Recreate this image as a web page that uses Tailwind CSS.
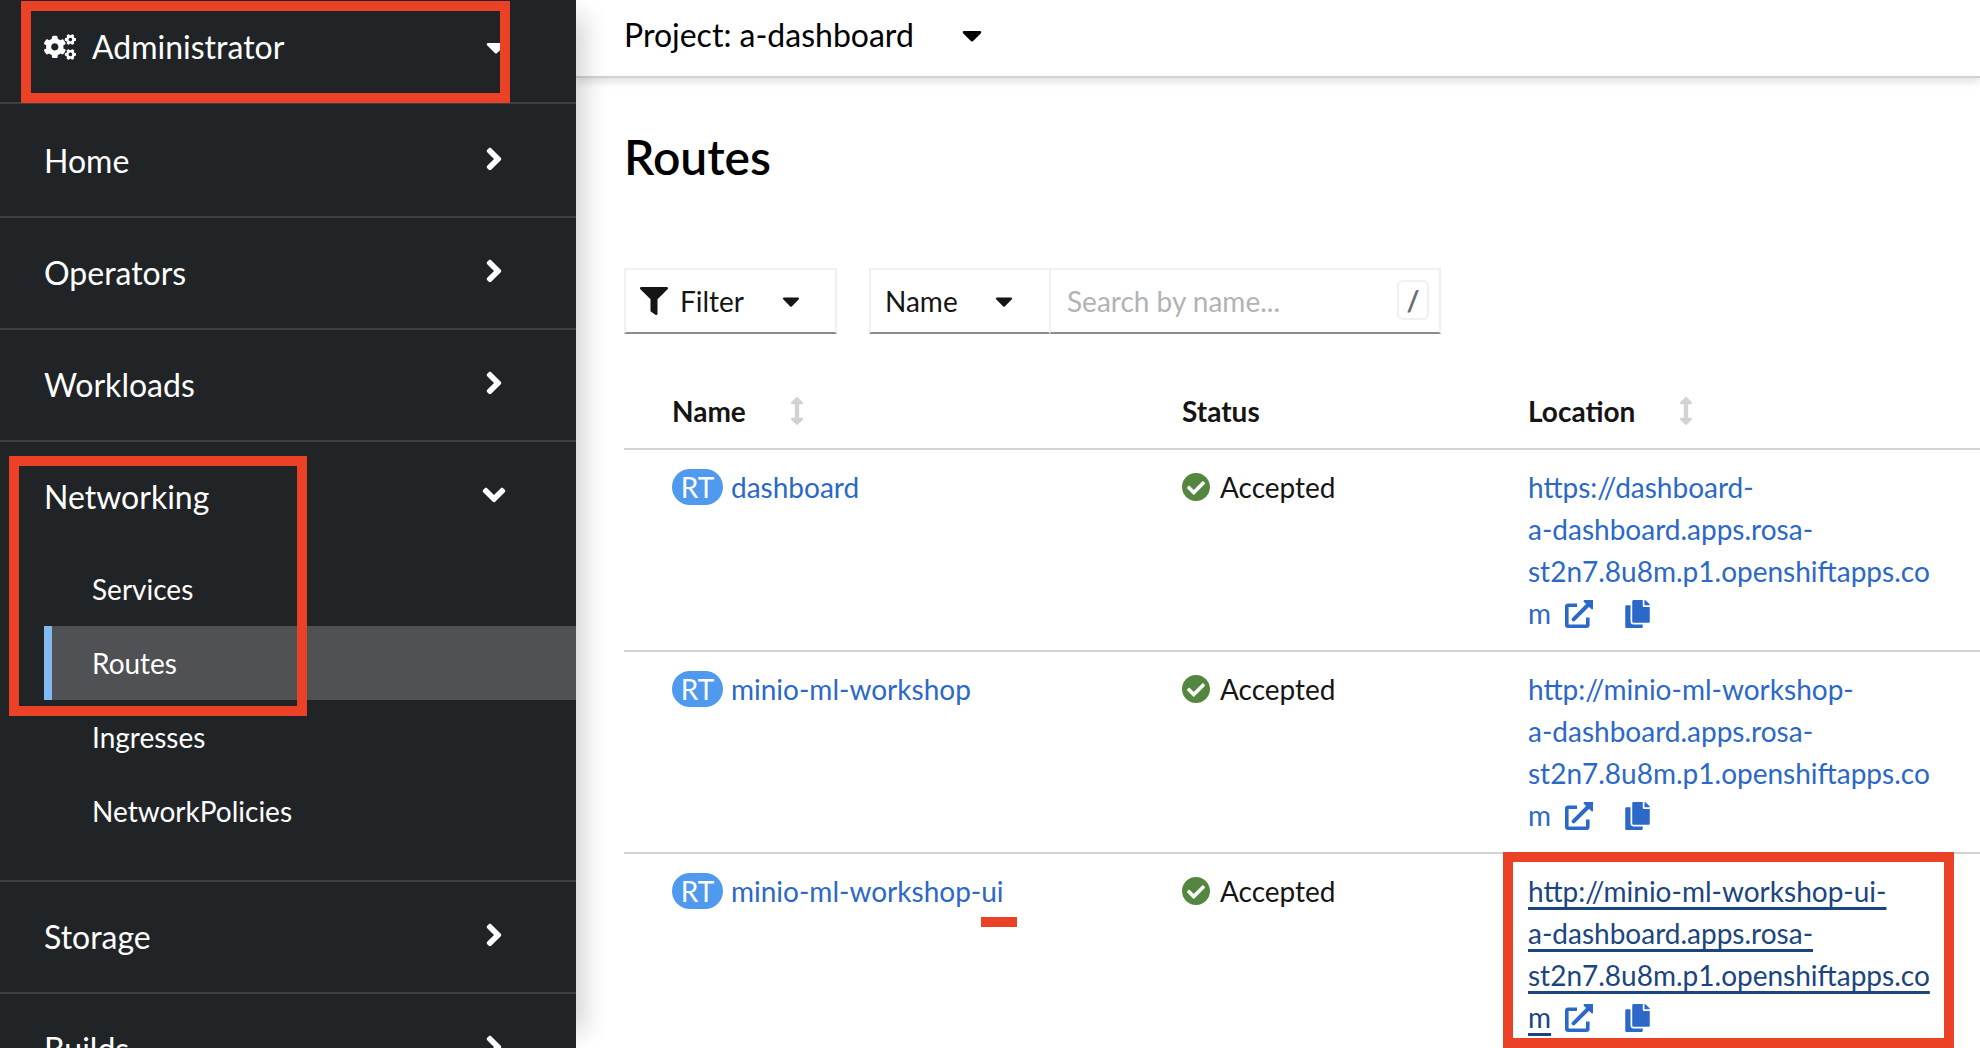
<!DOCTYPE html>
<html lang="en">
<head>
<meta charset="utf-8">
<title>Routes</title>
<script src="https://cdn.jsdelivr.net/npm/@tailwindcss/browser@4"></script>
</head>
<body class="h-screen overflow-hidden bg-white font-['Lato',sans-serif] text-[28px] leading-[42px] text-[#151515]">
<svg class="hidden">
  <symbol id="cogs" viewBox="0 0 640 512"><path d="M512.1 191l-8.2 14.3c-3 5.3-9.4 7.5-15.1 5.4-11.8-4.4-22.6-10.7-32.1-18.6-4.6-3.8-5.8-10.5-2.8-15.7l8.2-14.3c-6.9-8-12.3-17.3-15.9-27.4h-16.5c-6 0-11.2-4.3-12.2-10.3-2-12-2.1-24.6 0-37.1 1-6 6.2-10.4 12.2-10.4h16.5c3.6-10.1 9-19.4 15.9-27.4l-8.2-14.3c-3-5.2-1.9-11.9 2.8-15.7 9.5-7.9 20.4-14.2 32.1-18.6 5.7-2.1 12.1.1 15.1 5.4l8.2 14.3c10.5-1.9 21.2-1.9 31.7 0L552 6.3c3-5.3 9.4-7.5 15.1-5.4 11.8 4.4 22.6 10.7 32.1 18.6 4.6 3.8 5.8 10.5 2.8 15.7l-8.2 14.3c6.9 8 12.3 17.3 15.9 27.4h16.5c6 0 11.2 4.3 12.2 10.3 2 12 2.1 24.6 0 37.1-1 6-6.2 10.4-12.2 10.4h-16.5c-3.6 10.1-9 19.4-15.9 27.4l8.2 14.3c3 5.2 1.9 11.9-2.8 15.7-9.5 7.9-20.4 14.2-32.1 18.6-5.7 2.1-12.1-.1-15.1-5.4l-8.2-14.3c-10.4 1.9-21.2 1.9-31.7 0zm-10.5-58.8c38.5 29.6 82.4-14.3 52.8-52.8-38.5-29.7-82.4 14.3-52.8 52.8zM386.3 286.1l33.7 16.8c10.1 5.8 14.5 18.1 10.5 29.1-8.9 24.2-26.4 46.4-42.6 65.8-7.4 8.9-20.2 11.1-30.3 5.3l-29.1-16.8c-16 13.7-34.6 24.6-54.9 31.7v33.6c0 11.6-8.3 21.6-19.7 23.6-24.6 4.2-50.4 4.4-75.9 0-11.5-2-20-11.9-20-23.6V418c-20.3-7.2-38.9-18-54.9-31.7L74 403c-10 5.8-22.9 3.6-30.3-5.3-16.2-19.4-33.3-41.6-42.2-65.7-4-10.9.4-23.2 10.5-29.1l33.3-16.8c-3.9-20.9-3.9-42.4 0-63.4L12 205.8c-10.1-5.8-14.6-18.1-10.5-29 8.9-24.2 26-46.4 42.2-65.8 7.4-8.9 20.2-11.1 30.3-5.3l29.1 16.8c16-13.7 34.6-24.6 54.9-31.7V57.1c0-11.5 8.2-21.5 19.6-23.5 24.6-4.2 50.5-4.4 76-.1 11.5 2 20 11.9 20 23.6v33.6c20.3 7.2 38.9 18 54.9 31.7l29.1-16.8c10-5.8 22.9-3.6 30.3 5.3 16.2 19.4 33.2 41.6 42.1 65.8 4 10.9.1 23.2-10 29.1l-33.7 16.8c3.9 21 3.9 42.5 0 63.5zm-117.6 21.1c59.2-77-28.7-164.9-105.7-105.7-59.2 77 28.7 164.9 105.7 105.7zm243.4 182.7l-8.2 14.3c-3 5.3-9.4 7.5-15.1 5.4-11.8-4.4-22.6-10.7-32.1-18.6-4.6-3.8-5.8-10.5-2.8-15.7l8.2-14.3c-6.9-8-12.3-17.3-15.9-27.4h-16.5c-6 0-11.2-4.3-12.2-10.3-2-12-2.1-24.6 0-37.1 1-6 6.2-10.4 12.2-10.4h16.5c3.6-10.1 9-19.4 15.9-27.4l-8.2-14.3c-3-5.2-1.9-11.9 2.8-15.7 9.5-7.9 20.4-14.2 32.1-18.6 5.7-2.1 12.1.1 15.1 5.4l8.2 14.3c10.5-1.9 21.2-1.9 31.7 0l8.2-14.3c3-5.3 9.4-7.5 15.1-5.4 11.8 4.4 22.6 10.7 32.1 18.6 4.6 3.8 5.8 10.5 2.8 15.7l-8.2 14.3c6.9 8 12.3 17.3 15.9 27.4h16.5c6 0 11.2 4.3 12.2 10.3 2 12 2.1 24.6 0 37.1-1 6-6.2 10.4-12.2 10.4h-16.5c-3.6 10.1-9 19.4-15.9 27.4l8.2 14.3c3 5.2 1.9 11.9-2.8 15.7-9.5 7.9-20.4 14.2-32.1 18.6-5.7 2.1-12.1-.1-15.1-5.4l-8.2-14.3c-10.4 1.9-21.2 1.9-31.7 0zM501.6 431c38.5 29.6 82.4-14.3 52.8-52.8-38.5-29.6-82.4 14.3-52.8 52.8z"/></symbol>
  <symbol id="angle" viewBox="0 0 256 512"><path d="M224.3 273l-136 136c-9.4 9.4-24.6 9.4-33.9 0l-22.6-22.6c-9.4-9.4-9.4-24.6 0-33.9l96.4-96.4-96.4-96.4c-9.4-9.4-9.4-24.6 0-33.9L54.3 103c9.4-9.4 24.6-9.4 33.9 0l136 136c9.5 9.4 9.5 24.6.1 34z"/></symbol>
  <symbol id="caret" viewBox="0 0 320 512"><path d="M31.3 192h257.3c17.8 0 26.7 21.5 14.1 34.1L174.1 354.8c-7.8 7.8-20.5 7.8-28.3 0L17.2 226.1C4.6 213.5 13.5 192 31.3 192z"/></symbol>
  <symbol id="funnel" viewBox="0 0 512 512"><path d="M487.976 0H24.028C2.71 0-8.047 25.866 7.058 40.971L192 225.941V432c0 7.831 3.821 15.17 10.237 19.662l80 55.98C298.02 518.69 320 507.493 320 487.98V225.941l184.947-184.97C520.021 25.896 509.338 0 487.976 0z"/></symbol>
  <symbol id="sort" viewBox="0 0 256 512"><path d="M214.059 377.941H168V134.059h46.059c21.382 0 32.09-25.851 16.971-40.971L144.971 7.029c-9.373-9.373-24.568-9.373-33.941 0L24.971 93.088c-15.119 15.119-4.411 40.971 16.971 40.971H88v243.882H41.941c-21.382 0-32.09 25.851-16.971 40.971l86.059 86.059c9.373 9.373 24.568 9.373 33.941 0l86.059-86.059c15.12-15.119 4.412-40.971-16.97-40.971z"/></symbol>
  <symbol id="check" viewBox="8 8 496 496"><path d="M504 256c0 136.967-111.033 248-248 248S8 392.967 8 256 119.033 8 256 8s248 111.033 248 248zM227.314 387.314l184-184c6.248-6.248 6.248-16.379 0-22.627l-22.627-22.627c-6.248-6.249-16.379-6.249-22.628 0L216 308.118l-70.059-70.059c-6.248-6.248-16.379-6.248-22.628 0l-22.627 22.627c-6.248 6.248-6.248 16.379 0 22.627l104 104c6.249 6.249 16.379 6.249 22.628.001z"/></symbol>
  <symbol id="external" viewBox="0 0 28 28"><path d="M12 5.2H3.2Q1.8 5.2 1.8 6.6V24.8Q1.8 26.2 3.2 26.2H21.4Q22.8 26.2 22.8 24.8V17.5" fill="none" stroke="currentColor" stroke-width="3.6"/><path d="M8.6 19.4L23 5" fill="none" stroke="currentColor" stroke-width="4" stroke-linecap="round"/><path d="M19 0H28V9.2L26.5 9.2L18.5 1.5Z"/></symbol>
  <symbol id="copy" viewBox="0 0 448 512"><path d="M320 448v40c0 13.255-10.745 24-24 24H24c-13.255 0-24-10.745-24-24V120c0-13.255 10.745-24 24-24h72v296c0 30.879 25.121 56 56 56h168zm0-344V0H152c-13.255 0-24 10.745-24 24v368c0 13.255 10.745 24 24 24h272c13.255 0 24-10.745 24-24V128H344c-13.2 0-24-10.8-24-24zm120.971-31.029L375.029 7.029A24 24 0 0 0 358.059 0H352v96h96v-6.059a24 24 0 0 0-7.029-16.97z"/></symbol>
</svg>

<div class="flex h-full">
  <aside class="relative z-10 w-[576px] shrink-0 bg-[#212427] text-white shadow-[24px_0_24px_-16px_rgba(3,3,3,0.18)]">
    <div class="border-b-2 border-[#3c3f42]">
      <button class="flex h-[102px] w-full items-center pr-16 pb-2 pl-11 text-left text-[32px]">
        <svg class="mr-4 h-[26px] w-8 fill-current"><use href="#cogs"/></svg>
        <span class="grow">Administrator</span>
        <svg class="mr-1.5 h-8 w-5 fill-current"><use href="#caret"/></svg>
      </button>
    </div>
    <nav class="pt-0.5">
      <div class="border-b-2 border-[#3c3f42]"><button class="flex h-[110px] w-full items-center justify-between pr-16 pl-11 text-[32px]">Home<span class="mb-1 flex w-9 justify-center"><svg class="h-9 w-[18px] fill-current"><use href="#angle"/></svg></span></button></div>
      <div class="border-b-2 border-[#3c3f42]"><button class="flex h-[110px] w-full items-center justify-between pr-16 pl-11 text-[32px]">Operators<span class="mb-1 flex w-9 justify-center"><svg class="h-9 w-[18px] fill-current"><use href="#angle"/></svg></span></button></div>
      <div class="border-b-2 border-[#3c3f42]"><button class="flex h-[110px] w-full items-center justify-between pr-16 pl-11 text-[32px]">Workloads<span class="mb-1 flex w-9 justify-center"><svg class="h-9 w-[18px] fill-current"><use href="#angle"/></svg></span></button></div>
      <div class="border-b-2 border-[#3c3f42] pb-8">
        <button class="flex h-[110px] w-full items-center justify-between pr-16 pl-11 text-[32px]">Networking<span class="mb-1 flex w-9 justify-center"><svg class="h-9 w-[18px] rotate-90 fill-current"><use href="#angle"/></svg></span></button>
        <ul class="pl-11">
          <li><a href="#" class="block border-l-8 border-transparent py-4 pl-10">Services</a></li>
          <li><a href="#" aria-current="page" class="block border-l-8 border-[#83b9f2] bg-[#505154] py-4 pl-10">Routes</a></li>
          <li><a href="#" class="block border-l-8 border-transparent py-4 pl-10">Ingresses</a></li>
          <li><a href="#" class="block border-l-8 border-transparent py-4 pl-10">NetworkPolicies</a></li>
        </ul>
      </div>
      <div class="border-b-2 border-[#3c3f42]"><button class="flex h-[110px] w-full items-center justify-between pr-16 pl-11 text-[32px]">Storage<span class="mb-1 flex w-9 justify-center"><svg class="h-9 w-[18px] fill-current"><use href="#angle"/></svg></span></button></div>
      <div class="border-b-2 border-[#3c3f42]"><button class="flex h-[110px] w-full items-center justify-between pr-16 pl-11 text-[32px]">Builds<span class="mb-1 flex w-9 justify-center"><svg class="h-9 w-[18px] fill-current"><use href="#angle"/></svg></span></button></div>
    </nav>
  </aside>

  <main class="min-w-0 grow">
    <header class="flex h-[78px] items-center border-b-2 border-[#d2d2d2] pb-1.5 pl-12 shadow-[0_4px_8px_rgba(3,3,3,0.12)]">
      <button class="flex items-center gap-12 text-[32px] text-black">Project: a-dashboard<svg class="h-8 w-5 fill-current"><use href="#caret"/></svg></button>
    </header>

    <h1 class="pt-12 pl-12 text-[48px] leading-[62px] font-semibold text-black">Routes</h1>

    <div class="mt-20 ml-12 flex gap-8">
      <button class="flex h-[66px] w-[213px] items-center border-2 border-[#f0f0f0] border-b-[#8a8d90] pl-3.5">
        <svg class="mr-3 size-7 fill-current"><use href="#funnel"/></svg>
        <span class="w-[102px] text-left">Filter</span>
        <svg class="h-7 w-[18px] fill-current"><use href="#caret"/></svg>
      </button>
      <div class="flex">
        <div class="relative">
          <select aria-label="Filter by" class="h-[66px] w-[180px] appearance-none border-2 border-r-0 border-[#f0f0f0] border-b-[#8a8d90] bg-white pl-3.5"><option>Name</option></select>
          <svg class="pointer-events-none absolute top-[19px] right-9 h-7 w-[18px] fill-current"><use href="#caret"/></svg>
        </div>
        <div class="relative">
          <input type="text" aria-label="Search by name" placeholder="Search by name..." class="h-[66px] w-[392px] border-2 border-[#f0f0f0] border-b-[#8a8d90] pr-16 pl-4 placeholder:text-[#b1b3b6]">
          <kbd class="absolute top-3 right-3 flex h-10 w-8 items-center justify-center rounded-md border-2 border-[#f0f0f0] font-['Lato',sans-serif] text-[28px] font-bold text-[#6a6e73]">/</kbd>
        </div>
      </div>
    </div>

    <table class="mt-14 ml-12 w-[calc(100%-48px)] table-fixed text-left align-top">
      <thead>
        <tr class="border-b-2 border-[#d2d2d2]">
          <th class="w-[534px] pb-4 pl-12 font-bold"><button class="flex items-center gap-11 leading-[42px]">Name<svg class="h-7 w-3.5 fill-[#d2d2d2]"><use href="#sort"/></svg></button></th>
          <th class="w-[346px] pb-4 pl-6 font-bold">Status</th>
          <th class="pb-4 pl-6 font-bold"><button class="flex items-center gap-11 leading-[42px]">Location<svg class="h-7 w-3.5 fill-[#d2d2d2]"><use href="#sort"/></svg></button></th>
        </tr>
      </thead>
      <tbody class="align-top">
        <tr class="border-b-2 border-[#d2d2d2]">
          <td class="py-4 pl-12"><div class="flex items-center gap-2"><span class="flex h-9 w-[51px] items-center justify-center rounded-full bg-[#4f99ee] text-white">RT</span><a href="#" class="text-[#2b68c8]">dashboard</a></div></td>
          <td class="py-4 pl-6"><div class="flex items-center gap-2.5"><svg class="size-7 fill-[#54863f]"><use href="#check"/></svg>Accepted</div></td>
          <td class="py-4 pl-6 text-[#2b68c8]"><a href="#">https://dashboard-<br>a-dashboard.apps.rosa-<br>st2n7.8u8m.p1.openshiftapps.co<br>m</a><svg class="mb-1.5 ml-3.5 inline size-7 fill-current"><use href="#external"/></svg><button aria-label="Copy" class="ml-8"><svg class="mb-1.5 inline h-7 w-[25px] fill-current"><use href="#copy"/></svg></button></td>
        </tr>
        <tr class="border-b-2 border-[#d2d2d2]">
          <td class="py-4 pl-12"><div class="flex items-center gap-2"><span class="flex h-9 w-[51px] items-center justify-center rounded-full bg-[#4f99ee] text-white">RT</span><a href="#" class="text-[#2b68c8]">minio-ml-workshop</a></div></td>
          <td class="py-4 pl-6"><div class="flex items-center gap-2.5"><svg class="size-7 fill-[#54863f]"><use href="#check"/></svg>Accepted</div></td>
          <td class="py-4 pl-6 text-[#2b68c8]"><a href="#">http://minio-ml-workshop-<br>a-dashboard.apps.rosa-<br>st2n7.8u8m.p1.openshiftapps.co<br>m</a><svg class="mb-1.5 ml-3.5 inline size-7 fill-current"><use href="#external"/></svg><button aria-label="Copy" class="ml-8"><svg class="mb-1.5 inline h-7 w-[25px] fill-current"><use href="#copy"/></svg></button></td>
        </tr>
        <tr>
          <td class="py-4 pl-12"><div class="flex items-center gap-2"><span class="flex h-9 w-[51px] items-center justify-center rounded-full bg-[#4f99ee] text-white">RT</span><a href="#" class="text-[#2b68c8]">minio-ml-workshop-ui</a></div></td>
          <td class="py-4 pl-6"><div class="flex items-center gap-2.5"><svg class="size-7 fill-[#54863f]"><use href="#check"/></svg>Accepted</div></td>
          <td class="py-4 pl-6 text-[#2b68c8]"><a href="#" class="text-[#1b4580] underline decoration-[3px] underline-offset-[5px]">http://minio-ml-workshop-ui-<br>a-dashboard.apps.rosa-<br>st2n7.8u8m.p1.openshiftapps.co<br>m</a><svg class="mb-1.5 ml-3.5 inline size-7 fill-current"><use href="#external"/></svg><button aria-label="Copy" class="ml-8"><svg class="mb-1.5 inline h-7 w-[25px] fill-current"><use href="#copy"/></svg></button></td>
        </tr>
      </tbody>
    </table>
  </main>
</div>

<!-- Highlight annotations drawn over the console -->
<div class="pointer-events-none absolute top-px left-[21px] z-20 h-[102px] w-[489px] border-10 border-[#ea4127]"></div>
<div class="pointer-events-none absolute top-[456px] left-[9px] z-20 h-[260px] w-[298px] border-10 border-[#ea4127]"></div>
<div class="pointer-events-none absolute top-[852px] left-[1503px] z-20 h-[196px] w-[451px] border-10 border-[#ea4127]"></div>
<div class="pointer-events-none absolute top-[917px] left-[981px] z-20 h-2.5 w-9 bg-[#ea4127]"></div>
</body>
</html>
